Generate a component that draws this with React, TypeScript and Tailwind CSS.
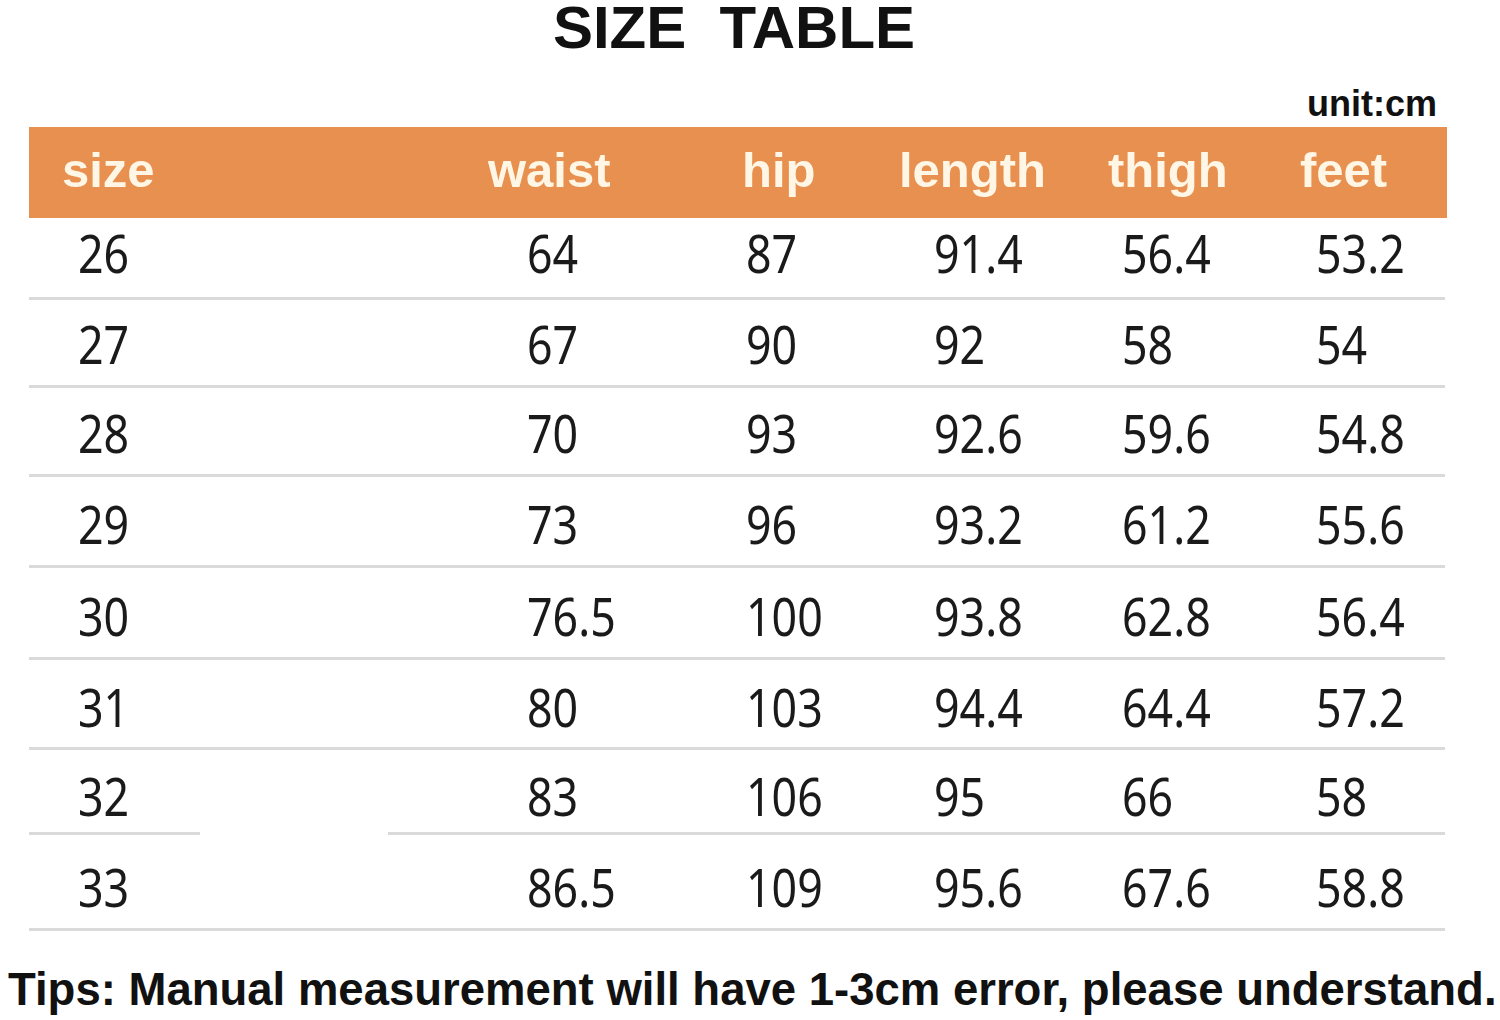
const heads = [
  { label: "size" },
  { label: "waist" },
  { label: "hip" },
  { label: "length" },
  { label: "thigh" },
  { label: "feet" },
];

const pads = ["pl-[16px]", "pl-[39px]", "pl-[4px]", "pl-[35px]", "pl-[14px]", "pl-[16px]"];

const rows = [
  { cells: ["26", "64", "87", "91.4", "56.4", "53.2"], h: "h-[79px]", pb: "pb-[18px]" },
  { cells: ["27", "67", "90", "92", "58", "54"], h: "h-[85px]", pb: "pb-[15px]" },
  { cells: ["28", "70", "93", "92.6", "59.6", "54.8"], h: "h-[86px]", pb: "pb-[15px]" },
  { cells: ["29", "73", "96", "93.2", "61.2", "55.6"], h: "h-[88px]", pb: "pb-[15px]" },
  { cells: ["30", "76.5", "100", "93.8", "62.8", "56.4"], h: "h-[89px]", pb: "pb-[15px]" },
  { cells: ["31", "80", "103", "94.4", "64.4", "57.2"], h: "h-[87px]", pb: "pb-[14px]" },
  { cells: ["32", "83", "106", "95", "66", "58"], h: "h-[82px]", pb: "pb-[10px]", split: true },
  { cells: ["33", "86.5", "109", "95.6", "67.6", "58.8"], h: "h-[93px]", pb: "pb-[15px]" },
];

const grid = "grid grid-cols-[426px_254px_157px_209px_192px_1fr] pl-[33px]";

function Row({ row }: { row: (typeof rows)[number] }) {
  return (
    <div>
      <div className={`${grid} ${row.h} ${row.pb} items-end`}>
        {row.cells.map((c, i) => (
          <div key={i} className={pads[i]}>
            <div className="origin-left scale-x-[0.86] text-[52px] leading-none text-[#1a1a1a]">{c}</div>
          </div>
        ))}
      </div>
      {row.split ? (
        <div className="flex h-[3px]">
          <div className="w-[171px] bg-[#dadada]" />
          <div className="ml-[188px] mr-[2px] flex-1 bg-[#dadada]" />
        </div>
      ) : (
        <div className="mr-[2px] h-[3px] bg-[#dadada]" />
      )}
    </div>
  );
}

export default function App() {
  return (
    <div className="h-[1020px] w-[1500px] overflow-hidden bg-white font-['Liberation_Sans',Arial,sans-serif]">
      <div className="ml-[29px] w-[1418px]">
        <h1 className="flex justify-center pr-[8px] text-[60px] font-bold leading-[56px] text-[#111]">
          SIZE&nbsp;&nbsp;TABLE
        </h1>
        <div className="mt-[30px] flex justify-end pr-[10px] text-[36px] font-bold leading-[36px] text-[#111]">
          unit:cm
        </div>
        <div className={`${grid} mt-[5px] h-[91px] items-center bg-[#e8904f] pb-[4px]`}>
          {heads.map((h) => (
            <div key={h.label} className="text-[49px] font-bold leading-none text-[#fff6e6]">
              {h.label}
            </div>
          ))}
        </div>
        <div className="font-['Noto_Sans','Liberation_Sans',sans-serif]">
          {rows.map((r) => (
            <Row key={r.cells[0]} row={r} />
          ))}
        </div>
      </div>
      <p className="ml-[8px] mt-[36px] whitespace-nowrap text-[45.5px] font-bold leading-[45px] text-[#111]">
        Tips: Manual measurement will have 1-3cm error, please understand.
      </p>
    </div>
  );
}
